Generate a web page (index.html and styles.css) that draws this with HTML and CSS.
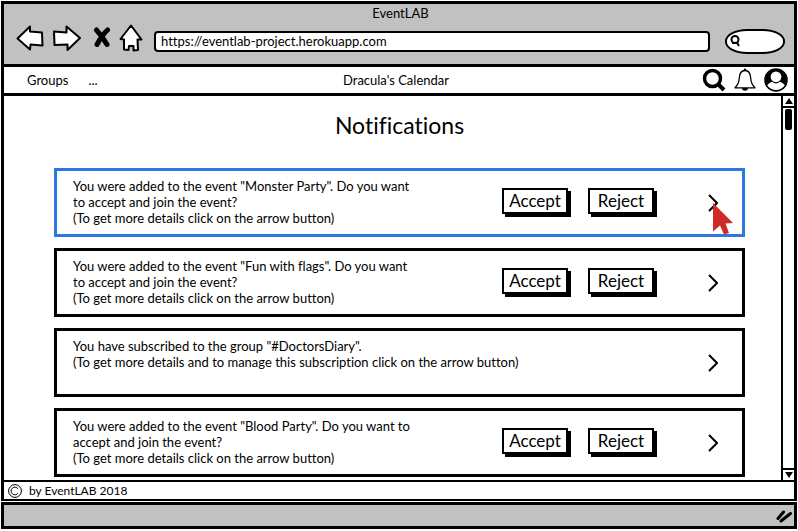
FILE: index.html
```html
<!DOCTYPE html>
<html lang="en">
<head>
<meta charset="utf-8">
<title>EventLAB</title>
<link rel="stylesheet" href="styles.css">
</head>
<body>
<div class="window">
  <header class="chrome">
    <div class="chrome-title">EventLAB</div>
    <div class="toolbar">
      <button class="tool back" aria-label="Back"><svg width="28" height="28" viewBox="0 0 28 28"><path d="M1.500 14.500 14 2.500V7.500L26 8.500 26.500 21.500 14.500 20.500 14 25.500Z"/></svg></button>
      <button class="tool forward" aria-label="Forward"><svg width="30" height="28" viewBox="0 0 30 28"><path d="M2 7.500 14.500 8.500V2.500L28 14 15.500 26V20.500L2.500 21Z"/></svg></button>
      <button class="tool stop" aria-label="Stop"><svg width="18" height="24" viewBox="0 0 18 24"><path class="cross" d="M3.500 4Q9 10 14 18.500M14.500 4Q9 9 4 18.500"/></svg></button>
      <button class="tool home" aria-label="Home"><svg width="24" height="28" viewBox="0 0 24 28"><path d="M12 1.500 22.500 15.500 18.500 15.500 19 26 14.500 26.500V22H10L9.500 26 5 25.500V15.500L1.500 15Z"/></svg></button>
      <input class="address" type="text" aria-label="Address" value="https://eventlab-project.herokuapp.com">
      <label class="web-search">
        <svg width="12" height="14" viewBox="0 0 12 14"><circle cx="6" cy="5.500" r="3.500"/><path d="M6 9H3M8 8.500 10 12"/></svg>
        <input type="text" aria-label="Web search">
      </label>
    </div>
  </header>

  <nav class="nav">
    <div class="nav-links"><a href="#">Groups</a><a href="#">...</a></div>
    <div class="nav-title">Dracula's Calendar</div>
    <div class="nav-actions">
      <button aria-label="Search"><svg width="24" height="24" viewBox="0 0 24 24"><circle cx="10.500" cy="10.500" r="8" fill="none" stroke="#000" stroke-width="3.500"/><path d="M16 16 22 22" stroke="#000" stroke-width="4"/></svg></button>
      <button aria-label="Notifications"><svg width="24" height="24" viewBox="0 0 24 24"><path d="M12 2.500C8 2.500 6.500 6 6.300 10 6 15 4.500 17.500 2 19.800H22C19.500 17.500 18 15 17.700 10 17.500 6 16 2.500 12 2.500Z" fill="none" stroke="#000" stroke-width="1.300" stroke-linejoin="round"/><circle cx="12" cy="1.700" r="1.200"/><path d="M9 20H15A3 2.800 0 0 1 9 20Z"/></svg></button>
      <button aria-label="Account"><svg width="24" height="24" viewBox="0 0 24 24"><circle cx="12" cy="12" r="11.800"/><circle cx="12" cy="8.800" r="5.400" fill="#fff"/><path d="M3.200 17.300Q5 14.500 8.300 13.800 12 17.200 15.700 13.800 19 14.500 20.800 17.300A10.600 10.600 0 0 1 3.200 17.300Z" fill="#fff"/></svg></button>
    </div>
  </nav>

  <div class="content">
    <main class="page">
      <h1>Notifications</h1>
      <ul class="cards">
        <li class="card selected">
          <p>You were added to the event "Monster Party". Do you want<br>to accept and join the event?<br>(To get more details click on the arrow button)</p>
          <div class="answers"><button class="answer">Accept</button><button class="answer">Reject</button></div>
          <button class="more" aria-label="Details"><svg width="10" height="20" viewBox="0 0 10 20"><path d="M1 2 9 10 1 18"/></svg></button>
          <svg class="pointer" width="22" height="34" viewBox="0 0 22 34"><path d="M1 0 21 20 13.500 20.500 17 30 12 31.500 8 22.500 1 28.500Z"/></svg>
        </li>
        <li class="card">
          <p>You were added to the event "Fun with flags". Do you want<br>to accept and join the event?<br>(To get more details click on the arrow button)</p>
          <div class="answers"><button class="answer">Accept</button><button class="answer">Reject</button></div>
          <button class="more" aria-label="Details"><svg width="10" height="20" viewBox="0 0 10 20"><path d="M1 2 9 10 1 18"/></svg></button>
        </li>
        <li class="card">
          <p>You have subscribed to the group "#DoctorsDiary".<br>(To get more details and to manage this subscription click on the arrow button)</p>
          <button class="more" aria-label="Details"><svg width="10" height="20" viewBox="0 0 10 20"><path d="M1 2 9 10 1 18"/></svg></button>
        </li>
        <li class="card">
          <p>You were added to the event "Blood Party". Do you want to<br>accept and join the event?<br>(To get more details click on the arrow button)</p>
          <div class="answers"><button class="answer">Accept</button><button class="answer">Reject</button></div>
          <button class="more" aria-label="Details"><svg width="10" height="20" viewBox="0 0 10 20"><path d="M1 2 9 10 1 18"/></svg></button>
        </li>
      </ul>
    </main>
    <div class="scrollbar">
      <button class="step" aria-label="Scroll up"><svg width="8" height="6" viewBox="0 0 8 6"><path d="M4 0 8 6H0Z"/></svg></button>
      <div class="track"><div class="thumb"></div></div>
      <button class="step down" aria-label="Scroll down"><svg width="8" height="6" viewBox="0 0 8 6"><path d="M0 0H8L4 6Z"/></svg></button>
    </div>
  </div>

  <footer class="footer">
    <svg width="14" height="14" viewBox="0 0 14 14"><circle cx="7" cy="7" r="6.400"/><path d="M10 4.800A3.800 3.800 0 1 0 10 9.200"/></svg>
    <span>by EventLAB 2018</span>
  </footer>
  <div class="status">
    <svg width="18" height="14" viewBox="0 0 18 14"><path d="M3 9.500 8.500 3M6 12 15.500 4.500"/></svg>
  </div>
</div>
</body>
</html>
```
FILE: styles.css
```css
* {
  box-sizing: border-box;
}

body {
  margin: 0;
  background: #fff;
  color: #000;
  font: 13px/16px Lato, sans-serif;
  font-variant-ligatures: none;
}

button {
  padding: 0;
  border: 0;
  background: none;
  color: inherit;
  font: inherit;
}

svg {
  display: block;
}

a {
  color: inherit;
  text-decoration: none;
}

.window {
  display: flex;
  flex-direction: column;
  height: 100vh;
  padding: 1px 1px 2px;
}

.chrome {
  flex: none;
  background: #c1c1c1;
  border: 3px solid #000;
  border-bottom: 0;
  padding: 1px 9px 9px 12px;
}

.chrome-title {
  text-align: center;
}

.toolbar {
  display: flex;
  align-items: center;
  height: 34px;
}

.tool path {
  fill: #fff;
  stroke: #000;
  stroke-width: 2;
  stroke-linejoin: round;
}

.tool .cross {
  fill: none;
  stroke-width: 5;
  stroke-linecap: round;
}

.forward {
  margin-left: 8px;
}

.stop {
  margin-left: 11px;
}

.home {
  margin-left: 8px;
}

.address {
  flex: 1;
  min-width: 0;
  height: 21px;
  margin: 6px 15px 0 11px;
  padding: 0 5px;
  border: 2px solid #000;
  border-radius: 4px;
  background: #fff;
  color: inherit;
  font: inherit;
}

.web-search {
  display: flex;
  align-items: center;
  width: 60px;
  height: 25px;
  margin-top: 6px;
  padding-left: 2px;
  border: 2px solid #000;
  border-radius: 22px / 12px;
  background: #fff;
}

.web-search svg {
  flex: none;
  fill: none;
  stroke: #000;
  stroke-width: 2;
}

.web-search input {
  width: 100%;
  min-width: 0;
  border: 0;
  padding: 0;
  background: none;
  font: inherit;
}

.nav {
  flex: none;
  display: grid;
  grid-template-columns: 1fr auto 1fr;
  align-items: center;
  height: 32px;
  padding-right: 6px;
  border: 3px solid #000;
}

.nav-links {
  display: flex;
  gap: 20px;
  padding-left: 23px;
}

.nav-actions {
  display: flex;
  justify-content: flex-end;
  gap: 7px;
}

.content {
  flex: 1;
  min-height: 0;
  display: flex;
  border: solid #000;
  border-width: 0 3px;
}

.page {
  flex: 1;
  min-width: 0;
  overflow: hidden;
  padding: 13px 36px 0 50px;
}

h1 {
  margin: 0;
  font-size: 23px;
  line-height: 32px;
  font-weight: 400;
  text-align: center;
}

.cards {
  display: grid;
  gap: 11px;
  margin: 27px 0 0;
  padding: 0;
  list-style: none;
}

.card {
  position: relative;
  display: flex;
  align-items: center;
  min-height: 69px;
  padding: 0 24px 0 16px;
  border: 3px solid #000;
}

.selected {
  border-color: #2b78e4;
}

.card p {
  flex: 1;
  align-self: flex-start;
  margin: 0;
  padding-top: 7px;
  white-space: nowrap;
}

.answers {
  display: flex;
  gap: 20px;
  margin: 0 54px 4px 0;
}

.answer {
  width: 66px;
  height: 26px;
  border: 2px solid #000;
  background: #fff;
  box-shadow: 3px 3px #000;
  font-size: 17px;
  line-height: 20px;
}

.more path {
  fill: none;
  stroke: #000;
  stroke-width: 2;
}

.pointer {
  position: absolute;
  right: 8px;
  top: 32px;
  fill: #cf2a27;
}

.scrollbar {
  flex: none;
  display: flex;
  flex-direction: column;
  width: 13px;
  border-left: 2px solid #000;
}

.step {
  display: grid;
  place-items: center;
  height: 12px;
  border-bottom: 2px solid #000;
}

.down {
  border-top: 2px solid #000;
  border-bottom: 0;
}

.track {
  flex: 1;
  padding: 1px 2px;
}

.thumb {
  height: 21px;
  border-radius: 2px;
  background: #000;
}

.footer {
  flex: none;
  display: flex;
  align-items: center;
  gap: 7px;
  height: 21px;
  padding-left: 4px;
  border: solid #000;
  border-width: 2px 3px;
  font-size: 12px;
}

.footer svg {
  fill: none;
  stroke: #000;
}

.status {
  flex: none;
  display: flex;
  align-items: center;
  justify-content: flex-end;
  height: 27px;
  margin-top: 1px;
  padding-right: 1px;
  border: 3px solid #000;
  background: #c1c1c1;
}

.status path {
  stroke: #000;
  stroke-width: 3;
  stroke-linecap: round;
}
```
